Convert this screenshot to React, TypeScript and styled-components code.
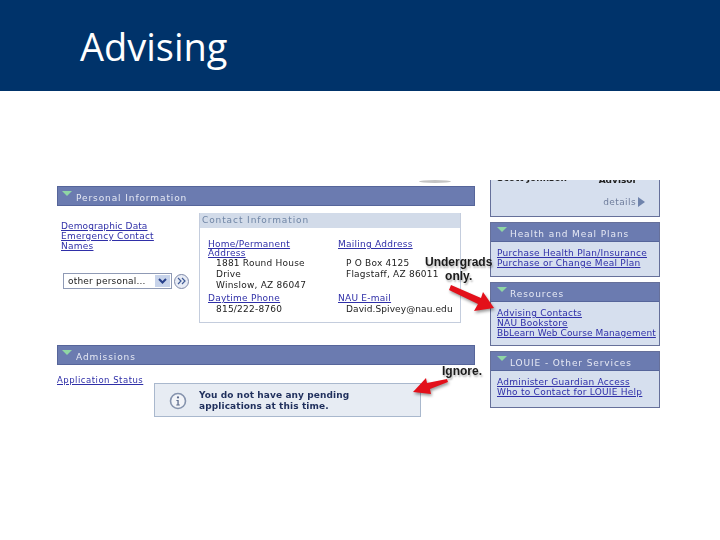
import React from "react";
import styled, { createGlobalStyle } from "styled-components";

const GlobalStyle = createGlobalStyle`
  html, body {
    margin: 0;
    padding: 0;
    background: #ffffff;
  }
`;

const Slide = styled.div`
  width: 720px;
  height: 540px;
  overflow: hidden;
  background: #ffffff;
`;

const Header = styled.header`
  height: 91px;
  box-sizing: border-box;
  padding: 22px 0 0 80px;
  background: #00336a;
`;

const Title = styled.h1`
  margin: 0;
  color: #ffffff;
  font-family: "Open Sans", sans-serif;
  font-size: 38px;
  font-weight: 400;
  line-height: 48px;
`;

const Shot = styled.div`
  position: relative;
  display: grid;
  grid-template-columns: 418px 170px;
  column-gap: 15px;
  width: 603px;
  height: 240px;
  margin: 89px 0 0 57px;
  font-family: "DejaVu Sans", sans-serif;
  font-size: 9px;
  filter: blur(0.4px);
`;

const Column = styled.div`
  display: flex;
  flex-direction: column;
`;

const LeftColumn = styled(Column)`
  padding-top: 6px;
`;

const Band = styled.div`
  display: flex;
  align-items: center;
  gap: 4px;
  box-sizing: border-box;
  height: 20px;
  padding: 3px 0 0 4px;
  background: #6b7bb0;
  border: 1px solid #56659a;
  color: #e6e9f4;
  letter-spacing: 0.9px;
`;

const SideBand = styled(Band)`
  height: 19px;
  padding-left: 6px;
  gap: 3px;
  border-width: 0 0 1px;
`;

const Caret = styled.span`
  width: 0;
  height: 0;
  margin-top: -9px;
  border-left: 5px solid transparent;
  border-right: 5px solid transparent;
  border-top: 5px solid #8fd6a4;
`;

const LinkText = styled.a<{ $tight?: boolean }>`
  display: block;
  color: #2f2fa8;
  line-height: 10px;
  letter-spacing: ${(p) => (p.$tight ? 0.1 : 0.25)}px;
  text-decoration: underline;
  white-space: nowrap;
`;

const WrappedLink = styled(LinkText)`
  margin-top: -1px;
`;

const PersonalBody = styled.div`
  display: flex;
  height: 139px;
  padding-top: 7px;
  box-sizing: border-box;
`;

const PersonalLinks = styled.div`
  display: flex;
  flex-direction: column;
  width: 142px;
  padding: 8px 0 0 4px;
  box-sizing: border-box;
`;

const SelectRow = styled.div`
  display: flex;
  align-items: center;
  gap: 2px;
  margin: 22px 0 0 2px;
`;

const SelectBox = styled.div`
  display: flex;
  align-items: center;
  justify-content: space-between;
  box-sizing: border-box;
  width: 109px;
  height: 16px;
  padding: 0 1px 0 4px;
  background: #ffffff;
  border: 1px solid #8f9ab5;
  color: #222222;
  letter-spacing: 0.2px;
`;

const SelectArrow = styled.span`
  display: flex;
  align-items: center;
  justify-content: center;
  width: 15px;
  height: 12px;
  background: #c7d3ea;
`;

const GoButton = styled.span`
  display: flex;
  align-items: center;
  justify-content: center;
  box-sizing: border-box;
  width: 15px;
  height: 15px;
  border: 1px solid #7d88a8;
  border-radius: 50%;
  background: #e8ecf5;
`;

const ContactPanel = styled.section`
  box-sizing: border-box;
  width: 262px;
  height: 110px;
  border: 1px solid #c4cddd;
  border-top: 0;
`;

const ContactTitle = styled.div`
  height: 15px;
  padding-left: 2px;
  background: #d2dbe9;
  color: #6f85a5;
  line-height: 15px;
  letter-spacing: 0.9px;
`;

const ContactGrid = styled.div`
  display: grid;
  grid-template-columns: 130px 120px;
  padding: 11px 0 0 8px;
`;

const ContactCell = styled.div`
  display: flex;
  flex-direction: column;
`;

const Address = styled.div<{ $before?: number; $after?: number; $tight?: boolean }>`
  margin: ${(p) => p.$before ?? 0}px 0 ${(p) => p.$after ?? 0}px 8px;
  color: #222222;
  line-height: 11px;
  letter-spacing: ${(p) => (p.$tight ? 0.1 : 0.22)}px;
  white-space: pre;
`;

const Admissions = styled.div`
  display: flex;
  flex-direction: column;
`;

const AdmissionsBody = styled.div`
  position: relative;
  padding-top: 10px;
`;

const StatusLink = styled(LinkText)`
  font-size: 8.5px;
  letter-spacing: 0.5px;
`;

const MessageBox = styled.div`
  display: flex;
  align-items: center;
  gap: 12px;
  box-sizing: border-box;
  width: 267px;
  height: 34px;
  margin: -2px 0 0 97px;
  padding: 2px 0 0 14px;
  background: #e7ecf3;
  border: 1px solid #a9b8cd;
  color: #1f2f5c;
  font-weight: 700;
  line-height: 11px;
  letter-spacing: 0.1px;
`;

const SideColumn = styled(Column)`
  gap: 5px;
`;

const SideBox = styled.section<{ $height: number }>`
  box-sizing: border-box;
  height: ${(p) => p.$height}px;
  overflow: hidden;
  background: #d6dfee;
  border: 1px solid #66709a;
`;

const AdvisorBox = styled(SideBox)`
  border-top: 0;
  color: #222222;
`;

const AdvisorName = styled.div`
  display: flex;
  justify-content: space-between;
  margin-top: -7px;
  padding: 0 22px 0 6px;
  line-height: 10px;
  font-weight: 700;
`;

const AdvisorRole = styled.span`
  padding-top: 2px;
`;

const Details = styled.div`
  display: flex;
  justify-content: flex-end;
  align-items: center;
  gap: 2px;
  margin-top: 12px;
  padding-right: 14px;
  color: #6f7d9c;
  letter-spacing: 0.4px;
`;

const DetailsArrow = styled.span`
  width: 0;
  height: 0;
  border-top: 5px solid transparent;
  border-bottom: 5px solid transparent;
  border-left: 7px solid #6f83ac;
`;

const SideLinks = styled.div`
  padding: 6px 0 0 6px;
`;

const Callout = styled.div<{ $left: number; $top: number; $center?: boolean }>`
  position: absolute;
  left: ${(p) => p.$left}px;
  top: ${(p) => p.$top}px;
  color: #1a1a1a;
  font-family: "Liberation Sans", sans-serif;
  font-size: 12px;
  font-weight: 700;
  line-height: 14px;
  text-align: ${(p) => (p.$center ? "center" : "left")};
  text-shadow: 1px 2px 2px rgba(0, 0, 0, 0.3);
`;

const ArrowLayer = styled.svg<{ $left: number; $top: number }>`
  position: absolute;
  left: ${(p) => p.$left}px;
  top: ${(p) => p.$top}px;
  overflow: visible;
  filter: drop-shadow(1px 2px 1.5px rgba(0, 0, 0, 0.4));
`;

const Smudge = styled.div`
  position: absolute;
  left: 362px;
  top: 0;
  width: 32px;
  height: 3px;
  border-radius: 50%;
  background: #c4c4c4;
`;

const SectionBand = ({ label, side }: { label: string; side?: boolean }) => {
  const Bar = side ? SideBand : Band;
  return (
    <Bar>
      <Caret />
      {label}
    </Bar>
  );
};

const App = () => {
  return (
    <Slide>
      <GlobalStyle />
      <Header>
        <Title>Advising</Title>
      </Header>
      <Shot>
        <LeftColumn>
          <SectionBand label="Personal Information" />
          <PersonalBody>
            <PersonalLinks>
              <LinkText $tight>Demographic Data</LinkText>
              <LinkText>Emergency Contact</LinkText>
              <LinkText>Names</LinkText>
              <SelectRow>
                <SelectBox>
                  other personal...
                  <SelectArrow>
                    <svg width="9" height="6" viewBox="0 0 9 6">
                      <path d="M1 1l3.500 3.500L8 1" fill="none" stroke="#27408b" strokeWidth="2" />
                    </svg>
                  </SelectArrow>
                </SelectBox>
                <GoButton>
                  <svg width="9" height="8" viewBox="0 0 9 8">
                    <path
                      d="M1 1l3 3-3 3M5 1l3 3-3 3"
                      fill="none"
                      stroke="#3f5a96"
                      strokeWidth="1.2"
                    />
                  </svg>
                </GoButton>
              </SelectRow>
            </PersonalLinks>
            <ContactPanel>
              <ContactTitle>Contact Information</ContactTitle>
              <ContactGrid>
                <ContactCell>
                  <LinkText>Home/Permanent</LinkText>
                  <WrappedLink>Address</WrappedLink>
                  <Address $after={2}>{"1881 Round House\nDrive\nWinslow, AZ 86047"}</Address>
                  <LinkText>Daytime Phone</LinkText>
                  <Address $before={1}>815/222-8760</Address>
                </ContactCell>
                <ContactCell>
                  <LinkText>Mailing Address</LinkText>
                  <Address $before={9} $after={13}>
                    {"P O Box 4125\nFlagstaff, AZ 86011"}
                  </Address>
                  <LinkText>NAU E-mail</LinkText>
                  <Address $before={1} $tight>
                    David.Spivey@nau.edu
                  </Address>
                </ContactCell>
              </ContactGrid>
            </ContactPanel>
          </PersonalBody>
          <Admissions>
            <SectionBand label="Admissions" />
            <AdmissionsBody>
              <StatusLink>Application Status</StatusLink>
              <MessageBox>
                <svg width="18" height="18" viewBox="0 0 18 18">
                  <circle cx="9" cy="9" r="7.5" fill="#f2f4f8" stroke="#8593ad" strokeWidth="1.6" />
                  <circle cx="9" cy="5.400" r="1.1" fill="#5d6c8c" />
                  <path d="M7.400 8h2.300v4.600h1.100v.900H7.300v-.900h1.100V8.900H7.400z" fill="#5d6c8c" />
                </svg>
                <span>
                  You do not have any pending
                  <br />
                  applications at this time.
                </span>
              </MessageBox>
            </AdmissionsBody>
          </Admissions>
        </LeftColumn>
        <SideColumn>
          <AdvisorBox $height={37}>
            <AdvisorName>
              <span>Scott Johnson</span>
              <AdvisorRole>Advisor</AdvisorRole>
            </AdvisorName>
            <Details>
              details
              <DetailsArrow />
            </Details>
          </AdvisorBox>
          <SideBox $height={55}>
            <SectionBand side label="Health and Meal Plans" />
            <SideLinks>
              <LinkText>Purchase Health Plan/Insurance</LinkText>
              <LinkText>Purchase or Change Meal Plan</LinkText>
            </SideLinks>
          </SideBox>
          <SideBox $height={64}>
            <SectionBand side label="Resources" />
            <SideLinks>
              <LinkText>Advising Contacts</LinkText>
              <LinkText>NAU Bookstore</LinkText>
              <LinkText $tight>BbLearn Web Course Management</LinkText>
            </SideLinks>
          </SideBox>
          <SideBox $height={57}>
            <SectionBand side label="LOUIE - Other Services" />
            <SideLinks>
              <LinkText>Administer Guardian Access</LinkText>
              <LinkText>Who to Contact for LOUIE Help</LinkText>
            </SideLinks>
          </SideBox>
        </SideColumn>
        <Smudge />
        <Callout $left={368} $top={75} $center>
          Undergrads
          <br />
          only.
        </Callout>
        <Callout $left={385} $top={184}>
          Ignore.
        </Callout>
        <ArrowLayer $left={388} $top={104} width="50" height="30" viewBox="0 0 50 30">
          <path d="M6 1l30 13 2-6 11 16-20 3 4-7L4 6z" fill="#e3101a" />
        </ArrowLayer>
        <ArrowLayer $left={356} $top={197} width="36" height="24" viewBox="0 0 36 24">
          <path d="M35 5L17 12l1 5L0 15 13 1l1 5 20-4z" fill="#e3101a" />
        </ArrowLayer>
      </Shot>
    </Slide>
  );
};

export default App;
